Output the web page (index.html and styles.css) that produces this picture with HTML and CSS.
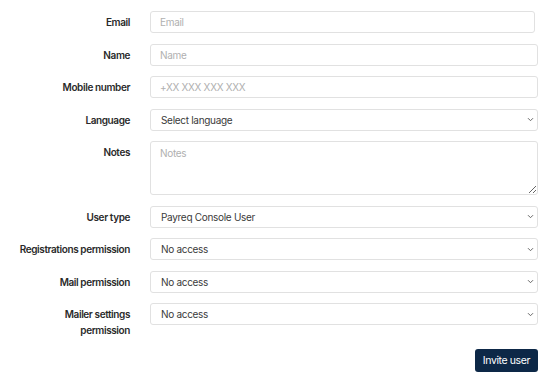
FILE: index.html
```html
<!DOCTYPE html>
<html lang="en">
<head>
    <meta charset="UTF-8">
    <meta name="viewport" content="width=device-width, initial-scale=1.0">
    <title>Invite user</title>
    <link rel="stylesheet" href="styles.css">
</head>
<body>
    <form class="invite-form">
        <label class="field-label" for="email">Email</label>
        <input class="field email-field" type="text" id="email" placeholder="Email">

        <label class="field-label" for="name">Name</label>
        <input class="field" type="text" id="name" placeholder="Name">

        <label class="field-label" for="mobile">Mobile number</label>
        <input class="field" type="text" id="mobile" placeholder="+XX XXX XXX XXX">

        <label class="field-label" for="language">Language</label>
        <select class="field select-field" id="language">
            <option>Select language</option>
        </select>

        <label class="field-label top" for="notes">Notes</label>
        <textarea class="field notes-field" id="notes" placeholder="Notes"></textarea>

        <label class="field-label" for="userType">User type</label>
        <select class="field select-field" id="userType">
            <option>Payreq Console User</option>
        </select>

        <label class="field-label" for="regPerm">Registrations permission</label>
        <select class="field select-field" id="regPerm">
            <option>No access</option>
        </select>

        <label class="field-label" for="mailPerm">Mail permission</label>
        <select class="field select-field" id="mailPerm">
            <option>No access</option>
        </select>

        <label class="field-label top" for="mailerPerm">Mailer settings permission</label>
        <select class="field select-field top-field" id="mailerPerm">
            <option>No access</option>
        </select>

        <div class="form-actions">
            <button type="button" class="invite-btn">Invite user</button>
        </div>
    </form>
</body>
</html>
```

FILE: styles.css
```css
body {
    margin: 0;
    padding: 0;
    background-color: #fff;
    font-family: Inter, "Noto Sans", sans-serif;
    color: #2b2b2b;
}

.invite-form {
    display: grid;
    grid-template-columns: 112px 1fr;
    column-gap: 20px;
    row-gap: 10.5px;
    padding: 11px 22px 0 18px;
    align-items: center;
}

.field-label {
    text-align: right;
    font-size: 10px;
    font-weight: 600;
    letter-spacing: -0.4px;
    line-height: 16px;
    color: #2a2a2a;
}

.field-label.top {
    align-self: start;
    padding-top: 3px;
}

.field {
    box-sizing: border-box;
    width: 100%;
    height: 22px;
    margin: 0;
    padding: 0 9px;
    border: 1px solid #e1e1e1;
    border-radius: 3px;
    background-color: #fff;
    font-family: inherit;
    font-size: 10px;
    letter-spacing: -0.3px;
    color: #3a3a3a;
    outline: none;
}

.top-field {
    align-self: start;
}

.email-field {
    width: calc(100% - 3px);
}

.field::placeholder {
    color: #b0b0b0;
}

.notes-field {
    height: 54px;
    padding-top: 5px;
    resize: vertical;
}

.select-field {
    appearance: none;
    -webkit-appearance: none;
    padding-left: 10px;
    background-image: url("data:image/svg+xml,%3Csvg xmlns='http://www.w3.org/2000/svg' width='7' height='5' viewBox='0 0 7 5'%3E%3Cpath d='M1 1.2l2.5 2.5 2.5-2.5' fill='none' stroke='%23666' stroke-width='1'/%3E%3C/svg%3E");
    background-repeat: no-repeat;
    background-position: right 3px center;
}

.form-actions {
    grid-column: 2;
    display: flex;
    justify-content: flex-end;
    padding-top: 0;
}

.invite-btn {
    height: 23px;
    padding: 0 8px;
    border: none;
    border-radius: 3px;
    background-color: #0d2847;
    color: #fff;
    font-family: inherit;
    font-size: 10.5px;
    letter-spacing: -0.4px;
    cursor: pointer;
}
```
